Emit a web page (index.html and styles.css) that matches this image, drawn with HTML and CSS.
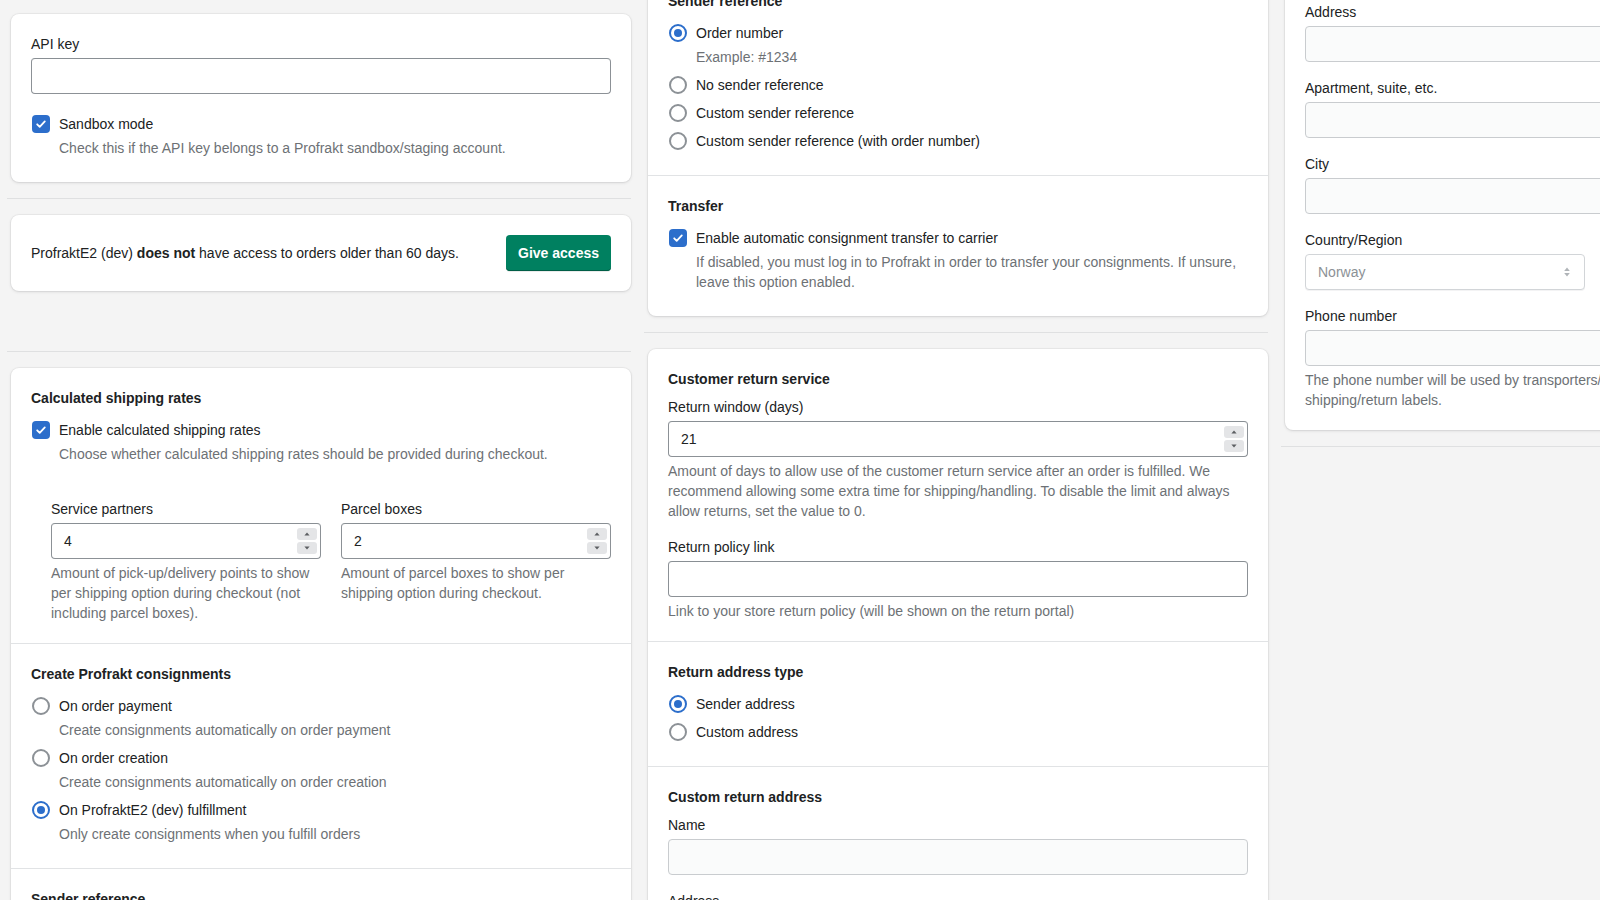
FILE: index.html
```html
<!DOCTYPE html>
<html lang="en">
<head>
<meta charset="utf-8">
<title>Profrakt settings</title>
<link rel="stylesheet" href="styles.css">
</head>
<body>
<div class="page">

  <!-- Column 1 -->
  <div class="col col-1">
    <div class="card">
      <div class="card-section">
        <div class="field">
          <label class="label">API key</label>
          <div class="input"></div>
        </div>
        <div class="choices mt16">
          <div class="choice">
            <span class="control"><span class="checkbox"><svg viewBox="0 0 18 18" width="18" height="18"><path d="M5.2 9.3l2.5 2.5 5.1-5.4" fill="none" stroke="#fff" stroke-width="1.8" stroke-linecap="round" stroke-linejoin="round"/></svg></span></span>
            <span>Sandbox mode</span>
          </div>
          <div class="choice-help">Check this if the API key belongs to a Profrakt sandbox/staging account.</div>
        </div>
      </div>
    </div>

    <div class="layout-section">
      <div class="card">
        <div class="card-section access-row">
          <p class="access-text">ProfraktE2 (dev) <b>does not</b> have access to orders older than 60 days.</p>
          <button class="btn-primary">Give access</button>
        </div>
      </div>
    </div>

    <div class="layout-section spaced">
      <div class="card">
        <div class="card-section">
          <h3 class="heading">Calculated shipping rates</h3>
          <div class="choice">
            <span class="control"><span class="checkbox"><svg viewBox="0 0 18 18" width="18" height="18"><path d="M5.2 9.3l2.5 2.5 5.1-5.4" fill="none" stroke="#fff" stroke-width="1.8" stroke-linecap="round" stroke-linejoin="round"/></svg></span></span>
            <span>Enable calculated shipping rates</span>
          </div>
          <div class="choice-help">Choose whether calculated shipping rates should be provided during checkout.</div>
          <div class="subgrid">
            <div class="field">
              <label class="label">Service partners</label>
              <div class="input">
                <span class="value">4</span>
                <span class="spinner">
                  <span class="spin"><svg width="6" height="4" viewBox="0 0 6 4"><path d="M3 0.5L5.6 3.5H0.4Z" fill="#5c5f62"/></svg></span>
                  <span class="spin"><svg width="6" height="4" viewBox="0 0 6 4"><path d="M3 3.5L0.4 0.5H5.6Z" fill="#5c5f62"/></svg></span>
                </span>
              </div>
              <div class="field-help">Amount of pick-up/delivery points to show per shipping option during checkout (not including parcel boxes).</div>
            </div>
            <div class="field">
              <label class="label">Parcel boxes</label>
              <div class="input">
                <span class="value">2</span>
                <span class="spinner">
                  <span class="spin"><svg width="6" height="4" viewBox="0 0 6 4"><path d="M3 0.5L5.6 3.5H0.4Z" fill="#5c5f62"/></svg></span>
                  <span class="spin"><svg width="6" height="4" viewBox="0 0 6 4"><path d="M3 3.5L0.4 0.5H5.6Z" fill="#5c5f62"/></svg></span>
                </span>
              </div>
              <div class="field-help">Amount of parcel boxes to show per shipping option during checkout.</div>
            </div>
          </div>
        </div>

        <div class="card-section">
          <h3 class="heading">Create Profrakt consignments</h3>
          <div class="choice">
            <span class="control"><span class="radio"></span></span>
            <span>On order payment</span>
          </div>
          <div class="choice-help">Create consignments automatically on order payment</div>
          <div class="choice">
            <span class="control"><span class="radio"></span></span>
            <span>On order creation</span>
          </div>
          <div class="choice-help">Create consignments automatically on order creation</div>
          <div class="choice">
            <span class="control"><span class="radio checked"><span class="dot"></span></span></span>
            <span>On ProfraktE2 (dev) fulfillment</span>
          </div>
          <div class="choice-help">Only create consignments when you fulfill orders</div>
        </div>

        <div class="card-section">
          <h3 class="heading">Sender reference</h3>
          <div class="choice">
            <span class="control"><span class="radio checked"><span class="dot"></span></span></span>
            <span>Order number</span>
          </div>
          <div class="choice-help">Example: #1234</div>
        </div>
      </div>
    </div>
  </div>

  <!-- Column 2 -->
  <div class="col col-2">
    <div class="card">
      <div class="card-section">
        <h3 class="heading">Sender reference</h3>
        <div class="choice">
          <span class="control"><span class="radio checked"><span class="dot"></span></span></span>
          <span>Order number</span>
        </div>
        <div class="choice-help">Example: #1234</div>
        <div class="choice">
          <span class="control"><span class="radio"></span></span>
          <span>No sender reference</span>
        </div>
        <div class="choice">
          <span class="control"><span class="radio"></span></span>
          <span>Custom sender reference</span>
        </div>
        <div class="choice">
          <span class="control"><span class="radio"></span></span>
          <span>Custom sender reference (with order number)</span>
        </div>
      </div>
      <div class="card-section">
        <h3 class="heading">Transfer</h3>
        <div class="choice">
          <span class="control"><span class="checkbox"><svg viewBox="0 0 18 18" width="18" height="18"><path d="M5.2 9.3l2.5 2.5 5.1-5.4" fill="none" stroke="#fff" stroke-width="1.8" stroke-linecap="round" stroke-linejoin="round"/></svg></span></span>
          <span>Enable automatic consignment transfer to carrier</span>
        </div>
        <div class="choice-help">If disabled, you must log in to Profrakt in order to transfer your consignments. If unsure, leave this option enabled.</div>
      </div>
    </div>

    <div class="layout-section">
      <div class="card">
        <div class="card-section">
          <h3 class="heading">Customer return service</h3>
          <div class="field">
            <label class="label">Return window (days)</label>
            <div class="input">
              <span class="value">21</span>
              <span class="spinner">
                <span class="spin"><svg width="6" height="4" viewBox="0 0 6 4"><path d="M3 0.5L5.6 3.5H0.4Z" fill="#5c5f62"/></svg></span>
                <span class="spin"><svg width="6" height="4" viewBox="0 0 6 4"><path d="M3 3.5L0.4 0.5H5.6Z" fill="#5c5f62"/></svg></span>
              </span>
            </div>
            <div class="field-help">Amount of days to allow use of the customer return service after an order is fulfilled. We recommend allowing some extra time for shipping/handling. To disable the limit and always allow returns, set the value to 0.</div>
          </div>
          <div class="field">
            <label class="label">Return policy link</label>
            <div class="input"></div>
            <div class="field-help">Link to your store return policy (will be shown on the return portal)</div>
          </div>
        </div>
        <div class="card-section">
          <h3 class="heading">Return address type</h3>
          <div class="choice">
            <span class="control"><span class="radio checked"><span class="dot"></span></span></span>
            <span>Sender address</span>
          </div>
          <div class="choice">
            <span class="control"><span class="radio"></span></span>
            <span>Custom address</span>
          </div>
        </div>
        <div class="card-section">
          <h3 class="heading">Custom return address</h3>
          <div class="field">
            <label class="label">Name</label>
            <div class="input disabled"></div>
          </div>
          <div class="field">
            <label class="label">Address</label>
            <div class="input disabled"></div>
          </div>
        </div>
      </div>
    </div>
  </div>

  <!-- Column 3 -->
  <div class="col col-3">
    <div class="card">
      <div class="card-section">
        <div class="field">
          <label class="label">Address</label>
          <div class="input disabled"></div>
        </div>
        <div class="field">
          <label class="label">Apartment, suite, etc.</label>
          <div class="input disabled"></div>
        </div>
        <div class="field">
          <label class="label">City</label>
          <div class="input disabled"></div>
        </div>
        <div class="field field-group">
          <div>
            <label class="label">Country/Region</label>
            <div class="select">
              <span class="select-value">Norway</span>
              <svg width="6" height="10" viewBox="0 0 6 10"><path d="M3 0.5L5.8 4H0.2Z M3 9.5L0.2 6H5.8Z" fill="#b0b4b8"/></svg>
            </div>
          </div>
          <div>
            <label class="label">Postal code</label>
            <div class="input disabled"></div>
          </div>
        </div>
        <div class="field">
          <label class="label">Phone number</label>
          <div class="input disabled"></div>
          <div class="field-help">The phone number will be used by transporters/carriers to contact you, and printed on shipping/return labels.</div>
        </div>
      </div>
    </div>
    <div class="layout-section"></div>
  </div>

</div>
</body>
</html>
```

FILE: styles.css
```css
html, body {
  margin: 0;
  height: 100%;
  overflow: hidden;
  background: #f4f4f4;
}

body {
  font-family: "Liberation Sans", Arial, sans-serif;
  font-size: 14px;
  line-height: 20px;
  color: #202223;
}

.page {
  display: flex;
  align-items: flex-start;
  gap: 13px;
  padding-left: 7px;
}

.col {
  flex: 0 0 624px;
  width: 624px;
}

.col-1 {
  padding-top: 14px;
}

.col-2 {
  margin-top: -29px;
}

.col-3 {
  margin-top: -18px;
}

.card {
  margin-left: 4px;
  width: 620px;
  background: #ffffff;
  border-radius: 8px;
  box-shadow: 0 0 0 1px rgba(63, 63, 68, 0.05), 0 1px 3px 0 rgba(63, 63, 68, 0.15);
}

.card-section {
  padding: 20px;
}

.card-section + .card-section {
  border-top: 1px solid #e1e3e5;
}

.layout-section {
  margin-top: 16px;
  padding-top: 16px;
  border-top: 1px solid #dfe0e1;
}

.layout-section.spaced {
  margin-top: 60px;
}

.heading {
  margin: 0 0 8px;
  font-size: 14px;
  line-height: 20px;
  font-weight: 700;
}

.label {
  display: block;
  margin-bottom: 4px;
}

.field + .field {
  margin-top: 16px;
}

.mt16 {
  margin-top: 16px;
}

.input {
  box-sizing: border-box;
  height: 36px;
  display: flex;
  align-items: center;
  padding: 0 3px 0 12px;
  background: #ffffff;
  border: 1px solid #8c9196;
  border-top-color: #898f94;
  border-radius: 4px;
}

.input.disabled {
  background: #fafbfb;
  border-color: #c9cccf;
}

.value {
  flex: 1;
}

.spinner {
  display: flex;
  flex-direction: column;
  gap: 2px;
}

.spin {
  width: 20px;
  height: 12px;
  border-radius: 3px;
  background: #e4e5e7;
  display: flex;
  align-items: center;
  justify-content: center;
}

.field-help {
  margin-top: 4px;
  color: #6d7175;
}

.choice {
  display: flex;
  align-items: center;
  padding: 4px 0;
}

.control {
  flex: 0 0 20px;
  width: 20px;
  height: 20px;
  margin-right: 8px;
  display: flex;
  align-items: center;
  justify-content: center;
}

.checkbox {
  width: 18px;
  height: 18px;
  border-radius: 4px;
  background: #2c6ecb;
  display: block;
}

.checkbox svg {
  display: block;
}

.radio {
  box-sizing: border-box;
  width: 18px;
  height: 18px;
  border-radius: 50%;
  border: 2px solid #8c9196;
  display: flex;
  align-items: center;
  justify-content: center;
}

.radio.checked {
  border-color: #2c6ecb;
}

.dot {
  width: 8px;
  height: 8px;
  border-radius: 50%;
  background: #2c6ecb;
}

.choice-help {
  padding-left: 28px;
  margin-bottom: 4px;
  color: #6d7175;
}

.subgrid {
  margin-top: 35px;
  padding-left: 20px;
  display: grid;
  grid-template-columns: 1fr 1fr;
  gap: 20px;
}

.subgrid .field + .field {
  margin-top: 0;
}

.access-row {
  display: flex;
  align-items: center;
  justify-content: space-between;
}

.access-text {
  margin: 0;
}

.btn-primary {
  height: 36px;
  padding: 0 12px;
  border: 0;
  border-radius: 4px;
  background: #008060;
  color: #ffffff;
  font-family: inherit;
  font-size: 14px;
  font-weight: 700;
  box-shadow: inset 0 -1px 0 #005e46, 0 1px 0 rgba(0, 0, 0, 0.08);
}

.field-group {
  display: grid;
  grid-template-columns: 1fr 1fr;
  gap: 20px;
}

.select {
  box-sizing: border-box;
  height: 36px;
  display: flex;
  align-items: center;
  padding: 0 14px 0 12px;
  background: #ffffff;
  border: 1px solid #d2d5d8;
  border-radius: 4px;
  box-shadow: 0 1px 0 rgba(22, 29, 37, 0.05);
}

.select-value {
  flex: 1;
  color: #8c9196;
}
```
